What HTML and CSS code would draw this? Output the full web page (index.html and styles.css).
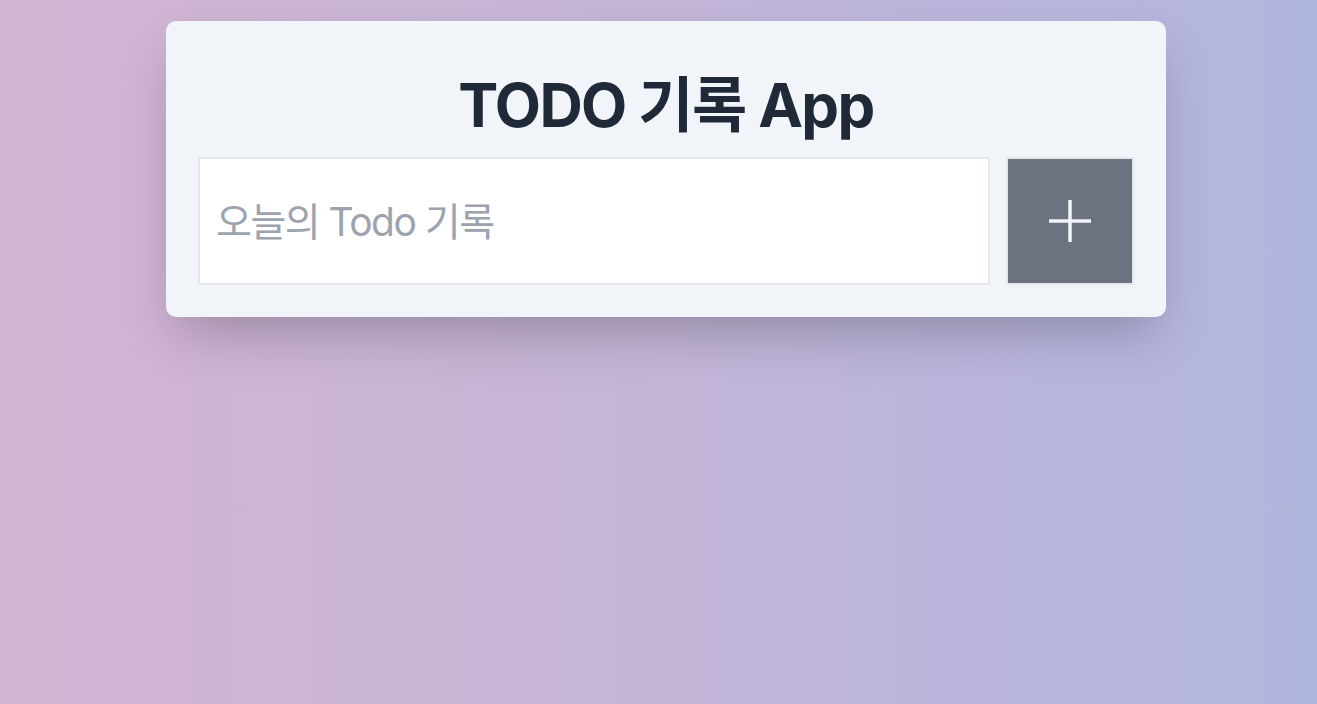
FILE: index.html
```html
<!DOCTYPE html>
<html lang="ko">
<head>
<meta charset="utf-8">
<title>TODO 기록 App</title>
<link rel="stylesheet" href="styles.css">
</head>
<body>
<main class="page">
  <section class="card">
    <h1 class="title">TODO 기록 App</h1>
    <form class="todo-form">
      <input class="todo-input" type="text" placeholder="오늘의 Todo 기록">
      <button class="add-btn" type="button" aria-label="추가">
        <svg width="44" height="44" viewBox="0 0 44 44" fill="none" stroke="#f1f5f9" stroke-width="3.5">
          <line x1="22" y1="1" x2="22" y2="43"/>
          <line x1="1" y1="22" x2="43" y2="22"/>
        </svg>
      </button>
    </form>
  </section>
</main>
</body>
</html>
```
FILE: styles.css
```css
* { box-sizing: border-box; }
html, body { margin: 0; height: 100%; }
body {
  font-family: Inter, "Noto Sans CJK KR", sans-serif;
  background: linear-gradient(to right, #d3b4d2, #c3b5d8 50%, #b1b6de);
}
.page {
  min-height: 100vh;
  display: flex;
  justify-content: center;
  align-items: flex-start;
  padding: 21px 0 0 15px;
}
.card {
  width: 1000px;
  background: #f1f5f9;
  border-radius: 10px;
  padding: 54px 32px 32px;
  box-shadow: 0 25px 50px -12px rgba(0, 0, 0, 0.25);
  display: flex;
  flex-direction: column;
  align-items: center;
}
.title {
  margin: 0 0 22px;
  font-size: 60px;
  line-height: 60px;
  font-weight: 700;
  color: #1f2937;
  letter-spacing: -1.6px;
}
.todo-form {
  width: 100%;
  display: flex;
  gap: 16px;
}
.todo-input {
  flex: 1;
  height: 128px;
  border: 2px solid #e5e7eb;
  background: #fff;
  padding: 0 16px;
  font-family: Inter, "Noto Sans CJK KR", sans-serif;
  font-size: 39px;
  letter-spacing: -1.5px;
  color: #1f2937;
  outline: none;
  border-radius: 0;
}
.todo-input::placeholder { color: #9ca3af; }
.add-btn {
  width: 128px;
  height: 128px;
  border: 2px solid #e5e7eb;
  background: #6b7280;
  display: flex;
  align-items: center;
  justify-content: center;
  padding: 0;
  cursor: pointer;
  border-radius: 0;
}
```
